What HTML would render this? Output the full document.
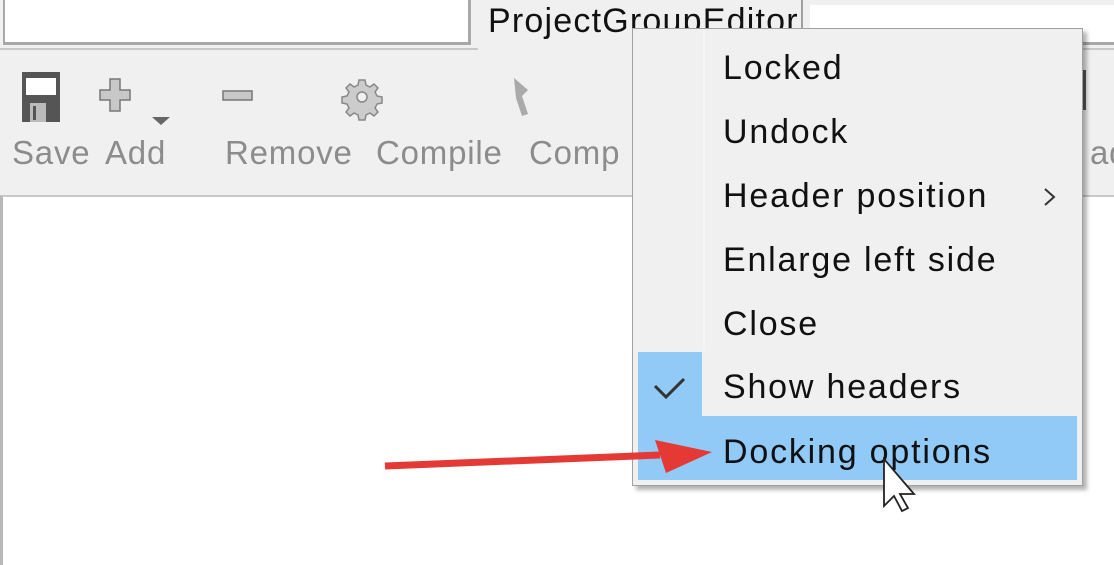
<!DOCTYPE html>
<html><head><style>
*{margin:0;padding:0;box-sizing:border-box}
body{width:1114px;height:565px;overflow:hidden;background:#f0f0f0;position:relative;font-family:"Liberation Sans",sans-serif}
.abs{position:absolute}
.tb{color:#8c8c8c;font-size:33px;top:134px;letter-spacing:0.8px}
.mi{position:absolute;left:723px;font-size:34px;letter-spacing:1.8px;color:#111;line-height:64px;height:64px}
</style></head><body>
<!-- top bar -->
<div class="abs" style="left:3px;top:0;width:468px;height:45px;background:#fff;border:3px solid #a8a8a8;border-top:none;border-left:2px solid #a8a8a8"></div>
<div class="abs" style="left:0;top:48px;width:1114px;height:2px;background:#c8c8c8"></div>
<div class="abs" style="left:478px;top:0;width:325px;height:50px;background:#f0f0f0;border-right:2px solid #a0a0a0"></div>
<div class="abs" style="left:488px;top:2px;font-size:34px;letter-spacing:1.2px;color:#111">ProjectGroupEditor</div>
<div class="abs" style="left:810px;top:5px;width:304px;height:40px;background:#fff;border-bottom:3px solid #a8a8a8"></div>
<!-- toolbar icons -->
<svg class="abs" style="left:0;top:60px" width="640" height="80">
<rect x="22" y="12" width="38" height="50" fill="#555"/>
<rect x="26" y="18" width="30" height="17" fill="#fff"/>
<rect x="30" y="43" width="16" height="19" fill="#bbb"/>
<rect x="33" y="46" width="3" height="14" fill="#555"/>
<path d="M110 19h10v11h10v10h-10v11h-10v-11h-10v-10h10z" fill="#c8c8c8" stroke="#777" stroke-width="1.5"/>
<path d="M152 57h18l-9 8z" fill="#666"/>
<rect x="223" y="31" width="29" height="9" fill="#c8c8c8" stroke="#777" stroke-width="1.5"/>
<g transform="translate(362,37)" fill="#ccc" stroke="#888" stroke-width="1.5">
<path d="M-3,-17h6l1,5 4,2 4,-3 4,4 -3,4 2,4 5,1v6l-5,1 -2,4 3,4 -4,4 -4,-3 -4,2 -1,5h-6l-1,-5 -4,-2 -4,3 -4,-4 3,-4 -2,-4 -5,-1v-6l5,-1 2,-4 -3,-4 4,-4 4,3 4,-2z"/>
<circle r="5" fill="#f0f0f0"/></g>
<path d="M514 18l14 12 -6 6 6 18 -6 2 -6-18z" fill="#aaa"/>
</svg>
<div class="abs tb" style="left:12px">Save</div>
<div class="abs tb" style="left:105px">Add</div>
<div class="abs tb" style="left:225px">Remove</div>
<div class="abs tb" style="left:376px">Compile</div>
<div class="abs tb" style="left:529px">Comp</div>
<div class="abs tb" style="left:1090px">ad</div>
<div class="abs" style="left:1082px;top:70px;width:4px;height:40px;background:#555"></div>
<!-- content -->
<div class="abs" style="left:0;top:195px;width:1114px;height:370px;background:#fff;border-top:2px solid #c8c8c8;border-left:3px solid #b8b8b8"></div>
<!-- menu -->
<div class="abs" style="left:632px;top:28px;width:451px;height:458px;background:#f0f0f0;border:1px solid #a0a0a0;box-shadow:4px 4px 4px rgba(0,0,0,.3)"></div>
<div class="abs" style="left:703px;top:30px;width:2px;height:320px;background:#f5f5f5"></div>
<div class="abs" style="left:638px;top:352px;width:64px;height:64px;background:#91c9f7"></div>
<div class="abs" style="left:638px;top:416px;width:439px;height:64px;background:#91c9f7"></div>
<div class="mi" style="top:36px">Locked</div>
<div class="mi" style="top:100px">Undock</div>
<div class="mi" style="top:164px">Header position</div>
<svg class="abs" style="left:1040px;top:186px" width="20" height="22"><path d="M5 3l9 8-9 8" fill="none" stroke="#333" stroke-width="2"/></svg>
<div class="mi" style="top:228px">Enlarge left side</div>
<div class="mi" style="top:292px">Close</div>
<div class="mi" style="top:355px">Show headers</div>
<div class="mi" style="top:420px">Docking options</div>
<svg class="abs" style="left:0;top:0" width="1114" height="565">
<path d="M655 386l11 11 18-18" fill="none" stroke="#333" stroke-width="3"/>
<path d="M385 466L660 455" stroke="#e53935" stroke-width="7"/>
<path d="M655 440L712 452 666 473z" fill="#e53935"/>
<path d="M884 459v47l10-10 8 15 6-3-8-14h14z" fill="#fff" stroke="#222" stroke-width="1.8"/>
</svg>
</body></html>
